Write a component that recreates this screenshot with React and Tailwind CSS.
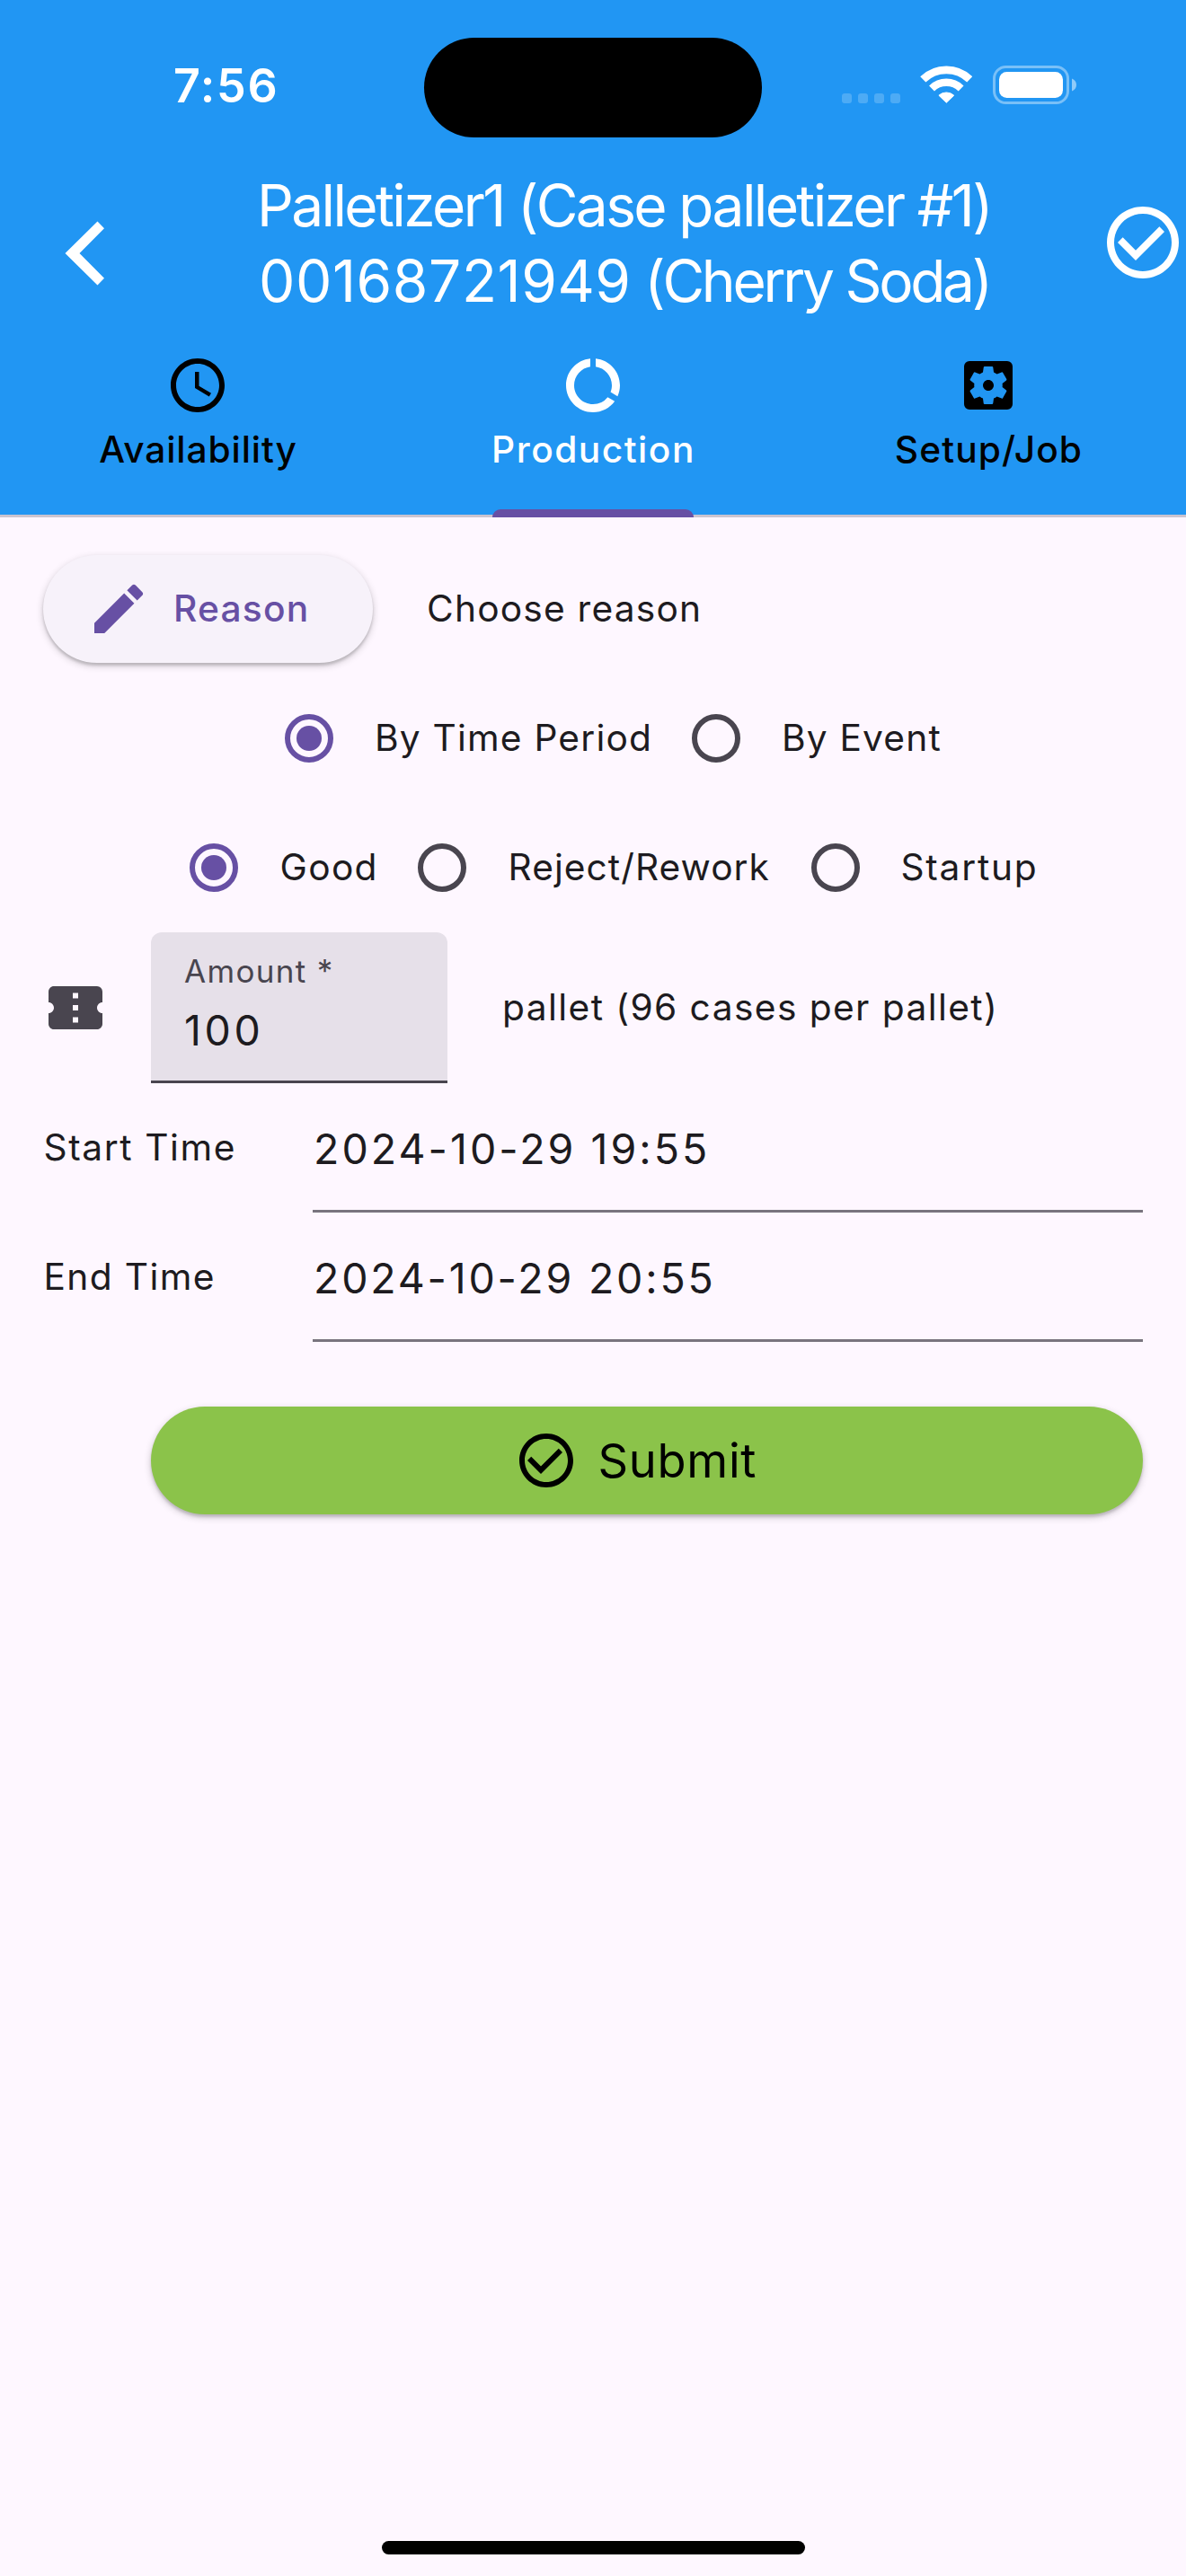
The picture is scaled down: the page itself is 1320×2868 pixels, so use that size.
import {
  MdSchedule,
  MdDataUsage,
  MdSettingsApplications,
  MdEdit,
  MdConfirmationNumber,
} from "react-icons/md";

function CheckCircle({ className }) {
  return (
    <svg viewBox="0 0 24 24" fill="currentColor" className={className}>
      <path d="M16.59 7.58 10 14.17l-3.59-3.58L5 12l5 5 8-8zM12 2C6.48 2 2 6.48 2 12s4.48 10 10 10 10-4.48 10-10S17.52 2 12 2zm0 18c-4.42 0-8-3.58-8-8s3.58-8 8-8 8 3.58 8 8-3.58 8-8 8z" />
    </svg>
  );
}

function StatusBar() {
  return (
    <div className="flex h-[187px] items-start">
      <div className="mt-[66px] w-[472px] pl-[193px] text-[52px] leading-[60px] font-semibold tracking-[1.64px]">
        7:56
      </div>
      <div className="mt-[42px] h-[111px] w-[376px] rounded-full bg-black" />
      <div className="mt-[104px] ml-[89px] flex gap-[7px]">
        <span className="h-[11px] w-[11px] rounded-[3px] bg-white/20" />
        <span className="h-[11px] w-[11px] rounded-[3px] bg-white/20" />
        <span className="h-[11px] w-[11px] rounded-[3px] bg-white/20" />
        <span className="h-[11px] w-[11px] rounded-[3px] bg-white/20" />
      </div>
      <svg viewBox="0 0 58 42" fill="none" stroke="#fff" className="mt-[73px] ml-[22px] h-[42px] w-[58px]">
        <path d="M3.300 15.400a37.300 37.300 0 0 1 52 0" strokeWidth="8.800" />
        <path d="M13 25.400a23.300 23.300 0 0 1 32.600 0" strokeWidth="8.400" />
        <path d="M20.900 33.200a12.500 12.500 0 0 1 16.800 0L29.300 41.300z" fill="#fff" strokeWidth="1" strokeLinejoin="round" />
      </svg>
      <svg viewBox="0 0 94 43" className="mt-[73px] ml-[23px] h-[43px] w-[94px]">
        <rect x="1.500" y="1.500" width="82" height="40" rx="13" fill="none" stroke="#fff" strokeOpacity=".4" strokeWidth="3" />
        <rect x="7" y="7" width="71" height="29" rx="8.500" fill="#fff" />
        <path d="M88 14.600c3.200 1.300 5 4 5 7s-1.800 5.700-5 7z" fill="#fff" fillOpacity=".5" />
      </svg>
    </div>
  );
}

function TitleBar() {
  return (
    <div className="flex h-[168px]">
      <svg viewBox="0 0 44 72" className="mt-[59px] ml-[72px] h-[72px] w-[44px] shrink-0">
        <path d="M36.500.5 44 8.200 16.500 36 44 63.800l-7.500 7.700L.5 36z" fill="#fff" />
      </svg>
      <h1 className="ml-[170px] w-[938px] text-[64px] leading-[84px] font-normal whitespace-nowrap">
        <span className="block tracking-[-2.620px]">Palletizer1 (Case palletizer #1)</span>
        <span className="block pl-[2px] tracking-[-3.300px]">
          <span className="tracking-[.6px]">00168721949</span> (Cherry Soda)
        </span>
      </h1>
      <CheckCircle className="mt-[35px] h-24 w-24 shrink-0" />
    </div>
  );
}

function Tab({ icon: Icon, className, children }) {
  return (
    <button className={`flex w-[440px] flex-col items-center pt-[38px] text-[40.700px] leading-[50px] font-medium whitespace-nowrap ${className}`}>
      <Icon className="h-[72px] w-[72px]" />
      <span className="mt-[11px] block pl-[1px]">{children}</span>
    </button>
  );
}

function Tabs() {
  return (
    <nav className="relative flex h-[221px] border-b-[3px] border-[#cac4d0]">
      <Tab icon={MdSchedule} className="tracking-[.89px] text-black">Availability</Tab>
      <Tab icon={MdDataUsage} className="tracking-[1.490px] text-white">Production</Tab>
      <Tab icon={MdSettingsApplications} className="tracking-[1.110px] text-black">Setup/Job</Tab>
      <div className="absolute -bottom-[3px] left-[548px] h-[9px] w-[224px] rounded-t-[9px] bg-[#6750a4]" />
    </nav>
  );
}

function Radio({ checked, className, children }) {
  return (
    <label className="flex h-full items-center">
      <span className="flex w-36 justify-center">
        <span className={`flex h-[54px] w-[54px] items-center justify-center rounded-full border-[6px] ${checked ? "border-[#6750a4]" : "border-[#49454f]"}`}>
          {checked && <span className="h-[28px] w-[28px] rounded-full bg-[#6750a4]" />}
        </span>
      </span>
      <span className={`whitespace-nowrap ${className}`}>{children}</span>
    </label>
  );
}

function TimeRow({ label, value, labelClass, valueClass }) {
  return (
    <div className="flex h-36 w-[1224px]">
      <span className={`w-[300px] pt-[47px] pl-[.5px] leading-[50px] ${labelClass}`}>{label}</span>
      <span className={`flex-1 border-b-[3px] border-[#79747e] pt-[43px] pl-[1px] text-[46.500px] leading-[60px] ${valueClass}`}>{value}</span>
    </div>
  );
}

const raised = "shadow-[0_3px_3px_rgba(0,0,0,.14),0_3px_9px_rgba(0,0,0,.2)]";

export default function App() {
  return (
    <div className="flex h-[2868px] w-[1320px] flex-col overflow-hidden bg-[#fef7ff] font-['Inter',sans-serif] text-[40.700px] leading-[50px] text-[#1d1b20]">
      <header className="bg-[#2196f3] text-white">
        <StatusBar />
        <TitleBar />
        <Tabs />
      </header>

      <main className="flex flex-1 flex-col pl-12">
        <div className="mt-[42px] flex h-[120px] items-center">
          <button className={`flex h-full w-[367px] items-center rounded-full bg-[#f7f2fa] pl-12 font-medium tracking-[1.200px] text-[#6750a4] ${raised}`}>
            <MdEdit className="h-[72px] w-[72px]" />
            <span className="ml-[25px]">Reason</span>
          </button>
          <span className="ml-[60px] tracking-[1.200px]">Choose reason</span>
        </div>

        <div className="mt-[12px] flex h-36 pl-[224px]">
          <Radio checked className="w-[309px] pl-[1px] tracking-[1.190px]">By Time Period</Radio>
          <Radio className="pl-[1px] tracking-[1.170px]">By Event</Radio>
        </div>
        <div className="flex h-36 pl-[118px]">
          <Radio checked className="w-[110px] pl-[1.500px] tracking-[1.320px]">Good</Radio>
          <Radio className="w-[293.500px] pl-[1.500px] tracking-[1.040px]">Reject/Rework</Radio>
          <Radio className="pl-[1px] tracking-[1.750px]">Startup</Radio>
        </div>

        <div className="flex h-[168px] items-center">
          <MdConfirmationNumber className="h-[72px] w-[72px] text-[#49454f]" />
          <div className="ml-12 flex h-full w-[330px] flex-col rounded-t-[12px] border-b-[3px] border-[#49454f] bg-[#e6e0e9] pl-[37px]">
            <span className="mt-[23px] text-[35px] leading-[40px] tracking-[1.320px] text-[#49454f]">Amount *</span>
            <span className="mt-[16px] text-[46.500px] leading-[60px] tracking-[3.580px]">100</span>
          </div>
          <span className="ml-[61px] tracking-[1.410px]">pallet (96 cases per pallet)</span>
        </div>

        <TimeRow label="Start Time" value="2024-10-29 19:55" labelClass="tracking-[1.590px]" valueClass="tracking-[3.040px]" />
        <TimeRow label="End Time" value="2024-10-29 20:55" labelClass="tracking-[1.370px]" valueClass="tracking-[2.800px]" />

        <button className={`mt-[72px] ml-[120px] flex h-[120px] w-[1104px] items-center rounded-full bg-[#8bc34a] pl-[404px] text-[52.400px] tracking-[.71px] text-black ${raised}`}>
          <CheckCircle className="h-[72px] w-[72px]" />
          <span className="ml-[21.500px]">Submit</span>
        </button>
      </main>

      <footer className="flex h-[39px] shrink-0 justify-center">
        <div className="h-[15px] w-[471px] rounded-full bg-black" />
      </footer>
    </div>
  );
}
